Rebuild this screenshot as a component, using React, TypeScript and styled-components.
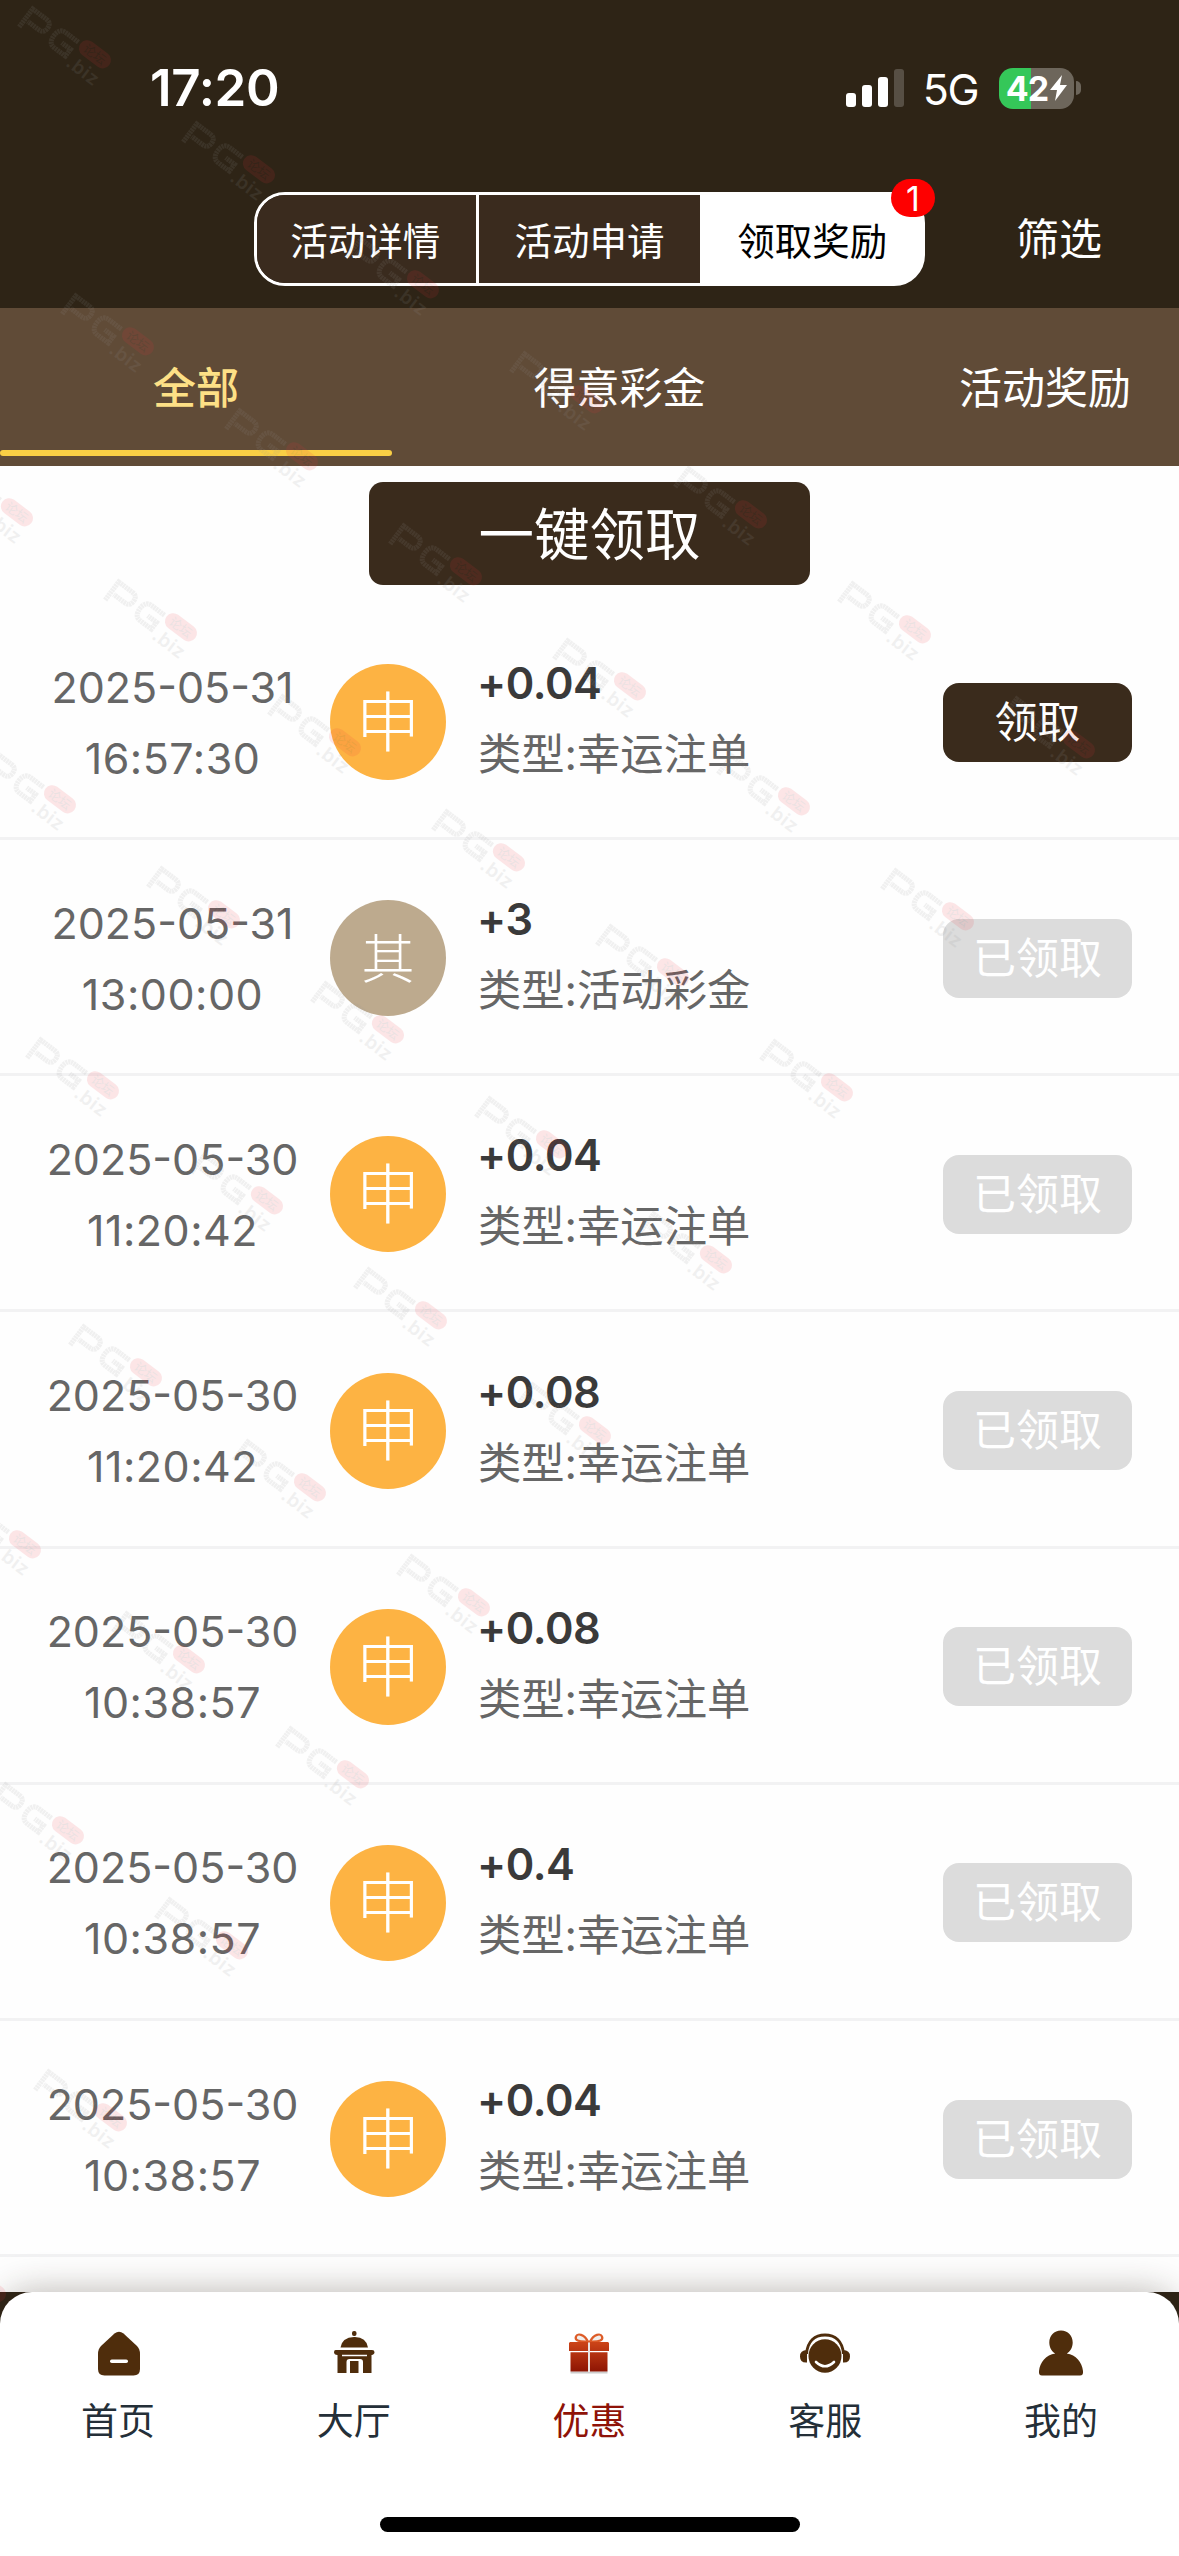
import React from "react";
import styled, { createGlobalStyle, css } from "styled-components";

const FONT = `Inter, "Noto Sans CJK SC", sans-serif`;

const Global = createGlobalStyle`
  *, *::before, *::after { box-sizing: border-box; }
  body { margin: 0; background: #fff; font-family: ${FONT}; }
`;

const Page = styled.div`
  position: relative;
  width: 1179px;
  height: 2556px;
  overflow: hidden;
  display: flex;
  flex-direction: column;
  background: #fefefe;
`;

const Header = styled.header`
  flex: none;
  height: 308px;
  background: #2e2416;
  color: #fff;
`;

const StatusBar = styled.div`
  height: 178px;
  padding: 57px 98px 0 150px;
  display: flex;
  justify-content: space-between;
  align-items: flex-start;
`;

const Clock = styled.span`
  font-size: 51px;
  line-height: 62px;
  font-weight: 600;
  letter-spacing: -0.3px;
`;

const StatusIcons = styled.div`
  display: flex;
  align-items: center;
  height: 62px;
`;

const Network = styled.span`
  font-size: 43px;
  line-height: 62px;
  margin: 2px 21px 0 19px;
  letter-spacing: -1.500px;
`;

const Battery = styled.div`
  display: flex;
  align-items: center;
  justify-content: center;
  gap: 2px;
  width: 75px;
  height: 41px;
  border-radius: 14px;
  background: linear-gradient(90deg, #35c759 32px, #6d665b 32px);
  font-size: 34px;
  font-weight: 700;
  letter-spacing: -1px;
`;

const BatteryTip = styled.div`
  width: 5px;
  height: 14px;
  margin-left: 2px;
  border-radius: 0 6px 6px 0;
  background: #6d665b;
`;

const NavRow = styled.div`
  display: flex;
  padding: 14px 0 0 254px;
`;

const Segments = styled.div`
  position: relative;
  display: flex;
  width: 671px;
  height: 94px;
  border: 3px solid #fff;
  border-radius: 31px;
  background: linear-gradient(90deg, transparent 50%, #fff 80%) border-box;
`;

const Segment = styled.div<{ $active?: boolean }>`
  display: flex;
  align-items: center;
  justify-content: center;
  width: 222px;
  padding-bottom: 2px;
  font-size: 37.500px;
  background: ${(p) => (p.$active ? "#fff" : "#3a2b1e")};
  color: ${(p) => (p.$active ? "#000" : "#fff")};
  &:first-child { border-radius: 28px 0 0 28px; border-right: 3px solid #fff; padding-right: 2px; }
  &:nth-child(3) { border-radius: 0 28px 28px 0; padding-left: 2px; }
`;

const Badge = styled.span`
  position: absolute;
  top: -16px;
  right: -13px;
  width: 44px;
  height: 38px;
  border-radius: 19px;
  background: #fe0000;
  font-size: 34px;
  line-height: 40px;
  text-align: center;
`;

const Filter = styled.div`
  margin-left: 91px;
  font-size: 43px;
  line-height: 94px;
`;

const Tabs = styled.nav`
  flex: none;
  display: flex;
  height: 158px;
  overflow: hidden;
  background: #604b37;
`;

const Tab = styled.div<{ $width: number; $active?: boolean }>`
  flex: none;
  display: flex;
  flex-direction: column;
  align-items: center;
  justify-content: space-between;
  width: ${(p) => p.$width}px;
  height: 148px;
  padding-top: 48px;
  line-height: 64px;
  font-size: 43px;
  font-weight: ${(p) => (p.$active ? 500 : 400)};
  color: ${(p) => (p.$active ? "#fde086" : "#fff")};
  &::after {
    content: "";
    align-self: stretch;
    height: 6px;
    border-radius: 3px;
    background: ${(p) => (p.$active ? "#f9cf45" : "transparent")};
  }
`;

const ClaimAll = styled.div`
  flex: none;
  align-self: center;
  width: 441px;
  height: 103px;
  margin: 16px 0 19px;
  border-radius: 14px;
  background: #3a2b1c;
  color: #fff;
  font-size: 55.500px;
  line-height: 106px;
  text-align: center;
`;

const List = styled.main`
  flex: 1;
  min-height: 0;
`;

const Row = styled.article`
  display: flex;
  align-items: center;
  height: 236.17px;
  padding: 3px 47px 0 0;
  border-bottom: 3px solid #f2f2f3;
`;

const When = styled.div`
  width: 345px;
  padding-top: 1px;
  text-align: center;
  font-size: 43px;
  line-height: 71px;
  color: #666;
`;

const Time = styled.div`
  letter-spacing: 0.5px;
`;

const Avatar = styled.div<{ $alt?: boolean }>`
  width: 116px;
  height: 116px;
  margin-left: -15px;
  border-radius: 50%;
  color: #fff;
  text-align: center;
  font-family: "Noto Sans CJK SC", sans-serif;
  font-weight: 300;
  ${(p) =>
    p.$alt
      ? css`background: #bdaa8e; font-size: 53px; line-height: 113px;`
      : css`background: #fdb343; font-size: 65px; line-height: 108px;`}
`;

const Info = styled.div`
  flex: 1;
  margin: -6px 0 0 32px;
  font-size: 43.300px;
  line-height: 71px;
  color: #666;
`;

const Amount = styled.div`
  color: #3a3a3a;
  font-weight: 600;
  letter-spacing: -0.4px;
  text-indent: -1px;
`;

const Claim = styled.div<{ $done?: boolean }>`
  width: 189px;
  height: 79px;
  border-radius: 16px;
  background: ${(p) => (p.$done ? "#dcdcdc" : "#3a2b1c")};
  color: #fff;
  font-size: 43px;
  line-height: 79px;
  text-align: center;
`;

const Footer = styled.footer`
  position: relative;
  flex: none;
  height: 264px;
  background: #2e2416;
`;

const Bar = styled.div`
  display: flex;
  flex-direction: column;
  align-items: center;
  justify-content: space-between;
  height: 264px;
  padding-bottom: 24px;
  border-radius: 32px 32px 0 0;
  background: #fff;
  box-shadow: 0 0 36px rgba(46, 36, 22, 0.34);
`;

const Items = styled.div`
  display: flex;
  align-self: stretch;
`;

const Item = styled.div<{ $active?: boolean }>`
  flex: 1;
  display: flex;
  flex-direction: column;
  align-items: center;
  padding-top: 36px;
  font-size: 37px;
  line-height: 52px;
  color: ${(p) => (p.$active ? "#8f1308" : "#242f38")};
  svg { margin-bottom: 18px; }
`;

const HomeIndicator = styled.div`
  width: 420px;
  height: 15px;
  border-radius: 8px;
  background: #000;
`;

const WatermarkLayer = styled.div`
  position: absolute;
  inset: 0;
  pointer-events: none;
`;

const Watermark = styled.svg`
  position: absolute;
  overflow: visible;
`;

const BROWN = "#4f2d0c";

const icons: Record<string, React.ReactNode> = {
  home: (
    <g transform="translate(1 0)">
      <path d="M20.500 5.500q4.500-3.500 9 0L43 18q3 3 3 8v15q0 6.500-6.500 6.500h-29Q4 47.500 4 41V26q0-5 3-8z" fill={BROWN} />
      <rect x="16" y="31.500" width="18" height="3.500" rx="1.750" fill="#fff" />
    </g>
  ),
  hall: (
    <g fill={BROWN}>
      <rect x="23" y="3" width="4.500" height="5" rx="2" />
      <path d="M11.500 19.500Q13 9.500 25 9t14 10.500z" />
      <path d="M7 22h36q2.500 0 2.500 2.300T42.500 27v18H34V34q0-3-3-3H20.500q-3 0-3 3v11H8.500V27Q5 26.800 5 24.300T7 22z" />
      <path d="M21 33h8.500v12H21z" />
      <path d="M13 27.500h25" stroke="#fff" strokeWidth="1.500" />
    </g>
  ),
  gift: (
    <>
      <defs>
        <linearGradient id="gift" x1="0" x2="0" y1="5" y2="45" gradientUnits="userSpaceOnUse">
          <stop stopColor="#e0531e" />
          <stop offset="1" stopColor="#8a1202" />
        </linearGradient>
      </defs>
      <path d="M6.500 44.500h37" stroke="#ccc" strokeWidth="2" />
      <path d="M24 14h2v30h-2z" fill="#e9e4e2" />
      <path d="M24 13.500C20 6 13.500 5 12 8.500s2 5.500 12 5zM26 13.500c4-7.500 10.500-8.500 12-5s-2 5.500-12 5z" fill="#f1eeec" stroke="#dd5c28" strokeWidth="2.200" />
      <path d="M6 14h18v9H5v-8zM26 14h18l1 1v8H26zM6.500 24.300H24v19.200H6.500zM26 24.300h17.500v19.200H26z" fill="url(#gift)" />
    </>
  ),
  service: (
    <>
      <path d="M6.500 26C7.500 13 15 7 25 7s17.500 6 18.500 19" fill="none" stroke={BROWN} strokeWidth="2.800" />
      <path d="M7 22v12.500Q0 35 0 28.500T7 22zM43 22v12.500q7 .5 7-6T43 22z" fill={BROWN} />
      <ellipse cx="25" cy="28" rx="16.500" ry="16.700" fill={BROWN} />
      <path d="M16 34q9 8.500 18 0" fill="none" stroke="#fff" strokeWidth="2.600" strokeLinecap="round" />
    </>
  ),
  user: (
    <path d="M25 2.500c7 0 11.700 5 11.700 12 0 5-2.500 9-6 11C40 27 46 34 47 43q.5 4.500-3 4.500H6q-3.500 0-3-4.500c1-9 7-16 16.300-17.500-3.500-2-6-6-6-11C13.300 7.500 18 2.500 25 2.500z" fill={BROWN} />
  ),
};

const menu = [
  { icon: "home", label: "首页" },
  { icon: "hall", label: "大厅" },
  { icon: "gift", label: "优惠", active: true },
  { icon: "service", label: "客服" },
  { icon: "user", label: "我的" },
];

const rows = [
  ["2025-05-31", "16:57:30", "申", "+0.04", "幸运注单"],
  ["2025-05-31", "13:00:00", "其", "+3", "活动彩金"],
  ["2025-05-30", "11:20:42", "申", "+0.04", "幸运注单"],
  ["2025-05-30", "11:20:42", "申", "+0.08", "幸运注单"],
  ["2025-05-30", "10:38:57", "申", "+0.08", "幸运注单"],
  ["2025-05-30", "10:38:57", "申", "+0.4", "幸运注单"],
  ["2025-05-30", "10:38:57", "申", "+0.04", "幸运注单"],
];

// First and last column of the diagonal watermark grid for each of its rows
const markRanges = [
  [0, 6], [0, 5], [-1, 4], [-1, 3], [-1, 2], [-2, 1], [-2, 0], [-2, -1], [-2, -2], [-3, -3],
];
const marks = markRanges.flatMap(([from, to], r) =>
  Array.from({ length: to - from + 1 }, (_, i) => ({
    x: 17 + 43 * r + 164 * (from + i),
    y: 4 + 286.6 * r + 115 * (from + i),
  })),
);

function Mark({ x, y }: { x: number; y: number }) {
  return (
    <Watermark width="100" height="84" style={{ left: x, top: y }}>
      <g transform="rotate(37)" opacity="0.13" fontFamily={FONT}>
        <g fill="none" stroke="#969696" strokeWidth="5" strokeDasharray="2.200 0.600">
          <path d="M15.500 17V-5.500H33Q39 -5.500 39 1T33 7.500H19" />
          <path d="M72 -6.500H56Q48.500 -6.500 48.500 3T56 12.500H70V4H59" />
        </g>
        <rect x="74.500" y="-15" width="36" height="16.500" rx="8.250" fill="#ee2f3c" opacity="0.9" />
        <text x="80" y="-2" fontSize="12.500" fill="#6a2a2a">论坛</text>
        <text x="75" y="20" fontSize="19" fontWeight="600" letterSpacing="0.600" fill="#969696">.biz</text>
      </g>
    </Watermark>
  );
}

export default function App() {
  return (
    <Page>
      <Global />
      <Header>
        <StatusBar>
          <Clock>17:20</Clock>
          <StatusIcons>
            <svg width="58" height="38" fill="#fff">
              <rect y="24" width="10" height="14" rx="3" />
              <rect x="16" y="16" width="10" height="22" rx="3" />
              <rect x="32" y="8" width="10" height="30" rx="3" />
              <rect x="48" width="10" height="38" rx="3" opacity="0.2" />
            </svg>
            <Network>5G</Network>
            <Battery>
              42
              <svg width="17" height="28" viewBox="0 0 17 26" fill="#fff">
                <path d="M12 0 0 15h7L5 26 17 10h-7z" />
              </svg>
            </Battery>
            <BatteryTip />
          </StatusIcons>
        </StatusBar>
        <NavRow>
          <Segments>
            <Segment>活动详情</Segment>
            <Segment>活动申请</Segment>
            <Segment $active>领取奖励</Segment>
            <Badge>1</Badge>
          </Segments>
          <Filter>筛选</Filter>
        </NavRow>
      </Header>
      <Tabs>
        <Tab $width={392} $active>全部</Tab>
        <Tab $width={455}>得意彩金</Tab>
        <Tab $width={396}>活动奖励</Tab>
      </Tabs>
      <ClaimAll>一键领取</ClaimAll>
      <List>
        {rows.map(([date, time, tag, amount, type], i) => (
          <Row key={i}>
            <When>
              <div>{date}</div>
              <Time>{time}</Time>
            </When>
            <Avatar $alt={tag === "其"}>{tag}</Avatar>
            <Info>
              <Amount>{amount}</Amount>
              <div>类型:{type}</div>
            </Info>
            <Claim $done={i > 0}>{i > 0 ? "已领取" : "领取"}</Claim>
          </Row>
        ))}
      </List>
      <Footer>
        <Bar>
          <Items>
            {menu.map((m) => (
              <Item key={m.icon} $active={m.active}>
                <svg width="50" height="50" viewBox="0 0 50 50">{icons[m.icon]}</svg>
                {m.label}
              </Item>
            ))}
          </Items>
          <HomeIndicator />
        </Bar>
      </Footer>
      <WatermarkLayer>
        {marks.map((m) => (
          <Mark key={`${m.x}-${m.y}`} {...m} />
        ))}
      </WatermarkLayer>
    </Page>
  );
}
